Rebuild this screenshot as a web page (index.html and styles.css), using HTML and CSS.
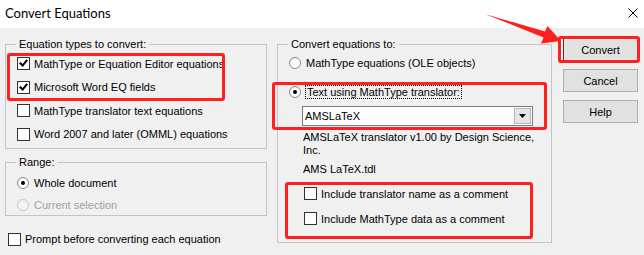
FILE: index.html
```html
<!DOCTYPE html>
<html lang="en">
<head>
    <meta charset="UTF-8">
    <title>Convert Equations</title>
    <link rel="stylesheet" href="styles.css">
</head>
<body>

    <div class="dialog">
        <div class="titlebar">
            <span class="title">Convert Equations</span>
            <svg class="close" width="10" height="10" viewBox="0 0 10 10">
                <path d="M0.5 0.5 L9.5 9.5 M9.5 0.5 L0.5 9.5" stroke="#000" stroke-width="1" fill="none"/>
            </svg>
        </div>

        <div class="content">
            <div class="col-left">
                <fieldset class="group group-types">
                    <legend>Equation types to convert:</legend>
                    <div class="row"><span class="check checked"></span>MathType or Equation Editor equations</div>
                    <div class="row"><span class="check checked"></span>Microsoft Word EQ fields</div>
                    <div class="row"><span class="check"></span>MathType translator text equations</div>
                    <div class="row"><span class="check"></span>Word 2007 and later (OMML) equations</div>
                </fieldset>

                <fieldset class="group group-range">
                    <legend>Range:</legend>
                    <div class="row row-range"><span class="radio on"></span>Whole document</div>
                    <div class="row row-range disabled"><span class="radio"></span>Current selection</div>
                </fieldset>

                <div class="row row-prompt"><span class="check"></span>Prompt before converting each equation</div>
            </div>

            <fieldset class="group col-mid">
                <legend>Convert equations to:</legend>
                <div class="row row-mid"><span class="radio"></span>MathType equations (OLE objects)</div>
                <div class="row row-mid row-text"><span class="radio on"></span><span class="focus">Text using MathType translator:</span></div>
                <div class="combo">
                    <span class="combo-value">AMSLaTeX</span>
                    <span class="combo-btn">
                        <svg width="7" height="4" viewBox="0 0 7 4"><path d="M0 0 L7 0 L3.5 4 Z" fill="#000"/></svg>
                    </span>
                </div>
                <div class="info">AMSLaTeX translator v1.00 by Design Science,<br>Inc.</div>
                <div class="info info-file">AMS LaTeX.tdl</div>
                <div class="options">
                    <div class="row row-opt"><span class="check"></span>Include translator name as a comment</div>
                    <div class="row row-opt"><span class="check"></span>Include MathType data as a comment</div>
                </div>
            </fieldset>

            <div class="col-buttons">
                <button class="btn btn-default">Convert</button>
                <button class="btn">Cancel</button>
                <button class="btn">Help</button>
            </div>
        </div>

        <!-- annotations drawn over the dialog -->
        <div class="mark mark-types"></div>
        <div class="mark mark-text"></div>
        <div class="mark mark-options"></div>
        <div class="mark mark-convert"></div>
        <svg class="arrow" width="644" height="255" viewBox="0 0 644 255">
            <polygon points="485,14 545,31.5 547.5,26 561,41 541,43.5 543.5,37.5" fill="#ff1f1f"/>
        </svg>
    </div>

</body>
</html>
```

FILE: styles.css
```css
body {
    margin: 0;
    background: #f0f0f0;
}

.dialog {
    position: relative;
    width: 644px;
    height: 255px;
    background: #f0f0f0;
    font-family: "Liberation Sans", Arial, sans-serif;
    font-size: 11px;
    color: #000;
    overflow: hidden;
}

.titlebar {
    height: 28px;
    background: #fff;
    display: flex;
    align-items: center;
    justify-content: space-between;
    padding: 0 6px 0 5px;
}

.title {
    font-family: Lato, "Noto Sans", sans-serif;
    font-size: 13px;
    margin-top: -2px;
}

.close {
    margin-top: -3px;
}

.content {
    display: flex;
    padding: 9px 0 0 5px;
}

.col-left {
    width: 262px;
    display: flex;
    flex-direction: column;
}

.group {
    margin: 0;
    border: 1px solid #c4c4c4;
    min-width: 0;
    box-sizing: border-box;
}

.group legend {
    padding: 0 3px;
    margin-left: -1px;
    line-height: 14px;
    height: 14px;
}

.group-types {
    padding: 1px 0 1px 11px;
    height: 112px;
}

.group-types .row {
    height: 23.5px;
}

.group-range {
    margin-top: 6px;
    padding: 3px 0 0 11px;
    height: 61px;
}

.row {
    display: flex;
    align-items: center;
    white-space: nowrap;
}

.row-range {
    height: 22px;
}

.row-prompt {
    margin-top: 13px;
    height: 20px;
    padding-left: 3px;
}

.disabled {
    color: #a0a0a0;
}

.check {
    width: 11px;
    height: 11px;
    border: 1px solid #333;
    background: #fff;
    margin-right: 4px;
    flex: none;
    position: relative;
}

.check.checked::after {
    content: "";
    position: absolute;
    left: 3px;
    top: 0px;
    width: 3px;
    height: 6px;
    border: solid #000;
    border-width: 0 2px 2px 0;
    transform: rotate(40deg);
}

.radio {
    width: 10px;
    height: 10px;
    border: 1px solid #8a8a8a;
    border-radius: 50%;
    background: radial-gradient(circle at 60% 60%, #fff 55%, #dcdcdc 100%);
    margin-right: 5px;
    flex: none;
    position: relative;
}

.radio.on::after {
    content: "";
    position: absolute;
    left: 3px;
    top: 3px;
    width: 4px;
    height: 4px;
    border-radius: 50%;
    background: #000;
}

.disabled .radio {
    border-color: #c8c8c8;
    background: #f4f4f4;
}

.col-mid {
    margin-left: 10px;
    width: 275px;
    height: 206px;
    padding: 1px 10px 0 11px;
}

.row-mid {
    height: 22px;
}

.row-text {
    margin-top: 7px;
}

.focus {
    outline: 1px dotted #000;
    outline-offset: 0;
    padding: 0 1px;
    line-height: 12px;
}

.combo {
    margin: 3px 0 0 13px;
    height: 20px;
    width: 231px;
    box-sizing: border-box;
    border: 1px solid #7a7a7a;
    background: #fff;
    display: flex;
    align-items: center;
    justify-content: space-between;
    padding: 0 1px 0 2px;
}

.combo-btn {
    width: 17px;
    height: 16px;
    box-sizing: border-box;
    background: #e6e6e6;
    border: 1px solid #b5b5b5;
    display: flex;
    align-items: center;
    justify-content: center;
}

.info {
    margin: 5px 0 0 14px;
    line-height: 13px;
}

.info-file {
    margin-top: 6px;
}

.options {
    margin: 5px 0 0 15px;
}

.row-opt {
    height: 25px;
}

.col-buttons {
    margin-left: 11px;
    padding-top: 1px;
    display: flex;
    flex-direction: column;
    gap: 8px;
}

.btn {
    width: 75px;
    height: 23px;
    margin: 0;
    font-family: "Liberation Sans", Arial, sans-serif;
    font-size: 11px;
    color: #000;
    background: #e1e1e1;
    border: 1px solid #adadad;
    padding: 0;
}

.btn-default {
    border: 1px solid #333;
    box-shadow: inset 0 0 0 1px #e9e9e9;
}

.mark {
    position: absolute;
    border: 3px solid #ff1f1f;
    border-radius: 3px;
    box-sizing: border-box;
}

.mark-types {
    left: 7px;
    top: 53px;
    width: 218px;
    height: 48px;
}

.mark-text {
    left: 272px;
    top: 82px;
    width: 275px;
    height: 48px;
}

.mark-options {
    left: 285px;
    top: 182px;
    width: 248px;
    height: 57px;
}

.mark-convert {
    left: 558px;
    top: 36px;
    width: 82px;
    height: 27px;
}

.arrow {
    position: absolute;
    left: 0;
    top: 0;
}
```
